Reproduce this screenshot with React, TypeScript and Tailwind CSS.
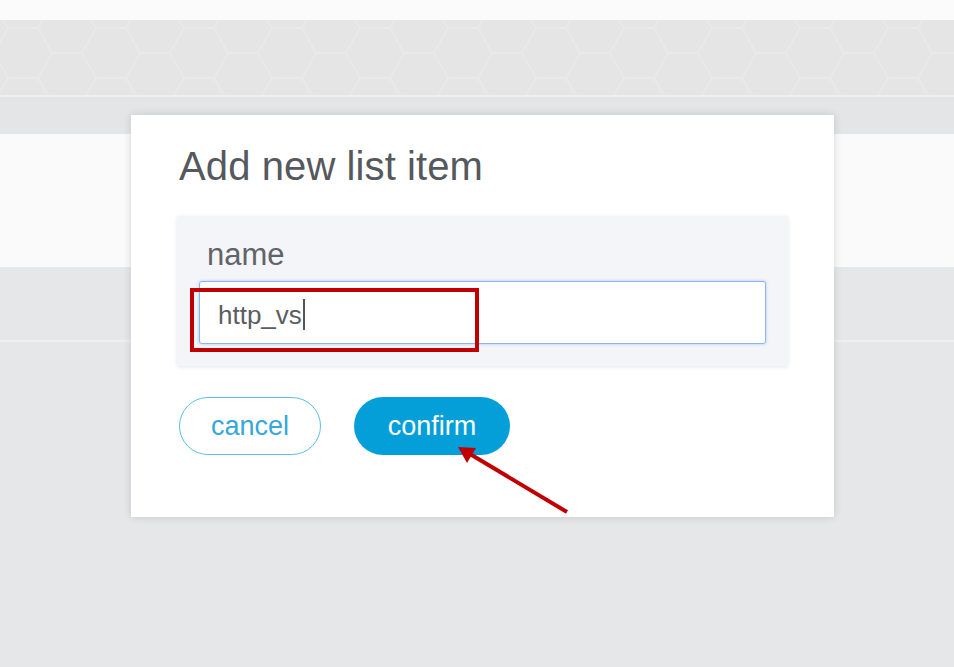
const HexBand = () => {
  return (
    <svg width="954" height="75" className="block">
      <defs>
        <pattern id="hex" width="88" height="50" patternUnits="userSpaceOnUse" x="-6" y="8">
          <path
            d="M0 25 L14 0 L44 0 L58 25 L44 50 L14 50 Z M44 0 L58 -25 M58 25 L88 25 M44 50 L58 75 M88 25 L102 0 M88 25 L102 50"
            fill="none"
            stroke="#eaeaea"
            strokeWidth="1.5"
          />
        </pattern>
      </defs>
      <rect width="954" height="75" fill="#e5e5e5" />
      <rect width="954" height="75" fill="url(#hex)" />
    </svg>
  )
}

const Arrow = () => {
  return (
    <svg width="954" height="667" className="absolute left-0 top-0 pointer-events-none">
      <line x1="567" y1="512" x2="470" y2="454" stroke="#c00000" strokeWidth="4" />
      <polygon points="458,447 476,448 467,463" fill="#c00000" />
    </svg>
  )
}

export default function App() {
  return (
    <div className="relative w-[954px] h-[667px] overflow-hidden bg-[#e6e7e9] font-['Liberation_Sans',Arial,sans-serif]">
      {/* page behind the dialog */}
      <div className="flex flex-col h-full">
        <div className="h-[20px] bg-[#fbfbfb]" />
        <HexBand />
        <div className="h-[2px] bg-[#eeeff1]" />
        <div className="h-[37px] bg-[#e4e5e7]" />
        <div className="h-[133px] bg-[#fafafa]" />
        <div className="h-[73px] bg-[#e6e7e9]" />
        <div className="h-[2px] bg-[#eeeff1]" />
        <div className="flex-1 bg-[#e6e7e9]" />
      </div>

      {/* dialog */}
      <div className="absolute left-[131px] top-[115px] w-[703px] h-[402px] bg-white shadow-[0_0_8px_rgba(0,0,0,0.14)] pl-[48px] pt-[31px]">
        <h1 className="text-[40px] leading-[40px] text-[#55585d] tracking-[0.1px]">Add new list item</h1>

        <div className="mt-[30px] -ml-[2px] w-[611px] h-[150px] bg-[#f4f5f8] shadow-[0_1px_4px_rgba(0,0,0,0.1)] pt-[23px] pl-[22px]">
          <div className="pl-[8px] text-[31px] leading-[31px] text-[#606367]">name</div>
          <div className="mt-[11px] w-[567px] h-[63px] bg-white border-[1.5px] border-[#8cb6f1] rounded-[3px] shadow-[0_0_3px_rgba(100,150,240,0.5)] flex items-center pl-[18px] pt-[4px]">
            <span className="text-[26px] text-[#5a5d61] leading-[28px]">http_vs</span>
            <span className="ml-[1px] w-[2px] h-[31px] bg-[#555]" />
          </div>
        </div>

        <div className="mt-[31px] flex gap-[33px]">
          <button className="w-[142px] h-[58px] rounded-full border-[1.5px] border-[#5bbfe8] text-[27px] text-[#35a7dc] bg-white">
            cancel
          </button>
          <button className="w-[156px] h-[58px] rounded-full bg-[#049fd9] text-[27px] text-white">
            confirm
          </button>
        </div>
      </div>

      {/* annotations */}
      <div className="absolute left-[190px] top-[288px] w-[289px] h-[64px] border-[4px] border-[#c00000]" />
      <Arrow />
    </div>
  )
}
